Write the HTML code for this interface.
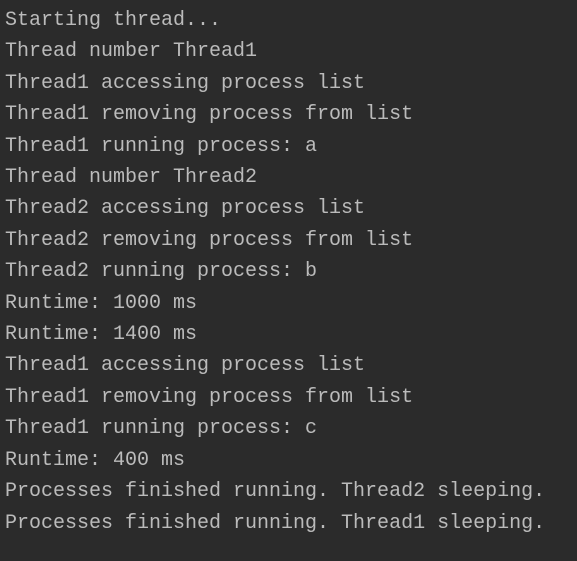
<!DOCTYPE html>
<html><head><style>
html,body{margin:0;padding:0;background:#2b2b2b;width:577px;height:561px;overflow:hidden}
pre{margin:0;padding:5px 0 0 5px;font-family:"Liberation Mono",monospace;font-size:20px;line-height:31.4px;color:#bbbbbb}
</style></head><body><pre>Starting thread...
Thread number Thread1
Thread1 accessing process list
Thread1 removing process from list
Thread1 running process: a
Thread number Thread2
Thread2 accessing process list
Thread2 removing process from list
Thread2 running process: b
Runtime: 1000 ms
Runtime: 1400 ms
Thread1 accessing process list
Thread1 removing process from list
Thread1 running process: c
Runtime: 400 ms
Processes finished running. Thread2 sleeping.
Processes finished running. Thread1 sleeping.</pre></body></html>
